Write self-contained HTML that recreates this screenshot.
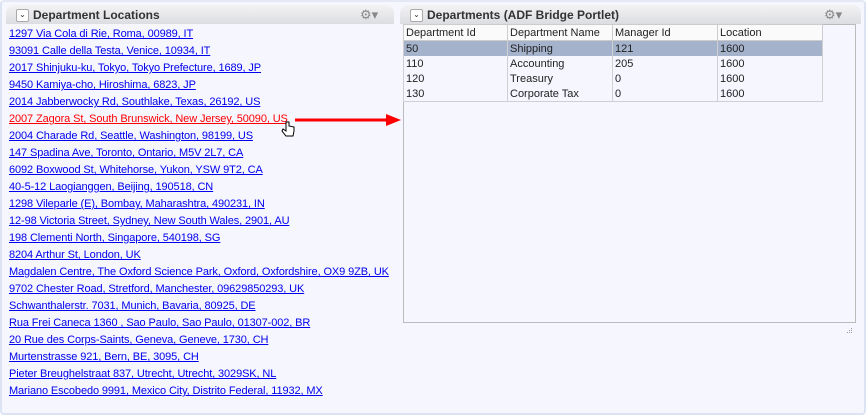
<!DOCTYPE html>
<html><head><style>
body{margin:0;width:866px;height:415px;background:#fff;font-family:"Liberation Sans",sans-serif;font-size:11px;overflow:hidden;position:relative}
.outer{position:absolute;left:0;top:0;width:862px;height:411px;background:#f5f6fe;border:2px solid #dce4f4;border-top:2px solid #e4e9f5;border-radius:4px}
.hdr{position:absolute;top:5px;height:19px;border-radius:8px 8px 0 0;background:linear-gradient(#f3f3f5,#dcdde2);}
.hdr b{position:absolute;left:27px;top:3px;font-size:12px;color:#333}
.tog{position:absolute;left:10px;top:4px;width:11px;height:11px;border:1px solid #aaa;background:#fff;border-radius:2px;font-size:8px;line-height:10px;text-align:center;color:#333}
.gear{position:absolute;top:2px;font-size:13px;color:#888}
a{position:absolute;left:9px;color:#0000ee;text-decoration:underline;white-space:nowrap;letter-spacing:-0.11px}
table{position:absolute;left:403px;top:24px;border-collapse:collapse}
td{height:15px;padding:0 0 0 2px;border:1px solid #d0d0d0;border-top:none;border-bottom:none;white-space:nowrap;color:#222}
tr.h td{background:#fafafa;border:1px solid #ccc;height:15px}
tr.s td{background:#a4b2cc}
</style></head><body>
<div class="outer"></div>
<div class="hdr" style="left:6px;width:388px"><span class="tog">⌄</span><b>Department Locations</b><span class="gear" style="left:354px">⚙▾</span></div>
<div class="hdr" style="left:400px;width:461px"><span class="tog">⌄</span><b>Departments (ADF Bridge Portlet)</b><span class="gear" style="left:424px">⚙▾</span></div>
<div style="position:absolute;left:403px;top:24px;width:451px;height:297px;border:1px solid #bbb;background:#f5f6fe"></div>
<a style="top:28px">1297 Via Cola di Rie, Roma, 00989, IT</a>
<a style="top:45px">93091 Calle della Testa, Venice, 10934, IT</a>
<a style="top:62px">2017 Shinjuku-ku, Tokyo, Tokyo Prefecture, 1689, JP</a>
<a style="top:79px">9450 Kamiya-cho, Hiroshima, 6823, JP</a>
<a style="top:96px">2014 Jabberwocky Rd, Southlake, Texas, 26192, US</a>
<a style="top:113px;color:#f00">2007 Zagora St, South Brunswick, New Jersey, 50090, US</a>
<a style="top:130px">2004 Charade Rd, Seattle, Washington, 98199, US</a>
<a style="top:147px">147 Spadina Ave, Toronto, Ontario, M5V 2L7, CA</a>
<a style="top:164px">6092 Boxwood St, Whitehorse, Yukon, YSW 9T2, CA</a>
<a style="top:181px">40-5-12 Laogianggen, Beijing, 190518, CN</a>
<a style="top:198px">1298 Vileparle (E), Bombay, Maharashtra, 490231, IN</a>
<a style="top:215px">12-98 Victoria Street, Sydney, New South Wales, 2901, AU</a>
<a style="top:232px">198 Clementi North, Singapore, 540198, SG</a>
<a style="top:249px">8204 Arthur St, London, UK</a>
<a style="top:266px">Magdalen Centre, The Oxford Science Park, Oxford, Oxfordshire, OX9 9ZB, UK</a>
<a style="top:283px">9702 Chester Road, Stretford, Manchester, 09629850293, UK</a>
<a style="top:300px">Schwanthalerstr. 7031, Munich, Bavaria, 80925, DE</a>
<a style="top:317px">Rua Frei Caneca 1360 , Sao Paulo, Sao Paulo, 01307-002, BR</a>
<a style="top:334px">20 Rue des Corps-Saints, Geneva, Geneve, 1730, CH</a>
<a style="top:351px">Murtenstrasse 921, Bern, BE, 3095, CH</a>
<a style="top:368px">Pieter Breughelstraat 837, Utrecht, Utrecht, 3029SK, NL</a>
<a style="top:385px">Mariano Escobedo 9991, Mexico City, Distrito Federal, 11932, MX</a>
<svg style="position:absolute;left:0;top:0" width="866" height="415">
<line x1="295" y1="120" x2="388" y2="120" stroke="#f00" stroke-width="3"/>
<polygon points="386,114 401,120 386,126" fill="#f00"/>
<path d="M286 122 v9 l-3 -2 l-1 2 l4 5 h7 l1 -5 v-4 l-5 -1 v-4 z" fill="#fff" stroke="#000" stroke-width="1"/>
<g fill="#999"><rect x="851" y="328" width="1" height="1"/><rect x="849" y="330" width="1" height="1"/><rect x="851" y="330" width="1" height="1"/><rect x="847" y="332" width="1" height="1"/><rect x="849" y="332" width="1" height="1"/><rect x="851" y="332" width="1" height="1"/></g>
</svg>
<table>
<tr class="h"><td style="width:101px">Department Id</td><td style="width:102px">Department Name</td><td style="width:102px">Manager Id</td><td style="width:102px">Location</td></tr>
<tr class="s"><td>50</td><td>Shipping</td><td>121</td><td>1600</td></tr>
<tr><td>110</td><td>Accounting</td><td>205</td><td>1600</td></tr>
<tr><td>120</td><td>Treasury</td><td>0</td><td>1600</td></tr>
<tr style="border-bottom:1px solid #d0d0d0"><td>130</td><td>Corporate Tax</td><td>0</td><td>1600</td></tr>
</table>
</body></html>
